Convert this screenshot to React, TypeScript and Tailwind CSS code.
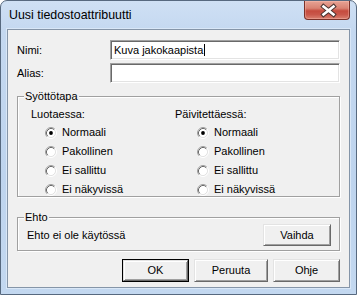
import React from "react";

function Radio({ checked, label }: { checked?: boolean; label: string }) {
  return (
    <div className="flex h-[13px] items-center gap-[5px]">
      <svg width="12" height="12" viewBox="0 0 12 12" className="shrink-0">
        <circle cx="6" cy="6" r="4.2" fill="#ffffff" />
        <path d="M2.11 9.89 A5.5 5.5 0 0 1 9.89 2.11" fill="none" stroke="#a0a0a0" strokeWidth="1" />
        <path d="M9.89 2.11 A5.5 5.5 0 0 1 2.11 9.89" fill="none" stroke="#ffffff" strokeWidth="1" />
        <path d="M2.82 9.18 A4.5 4.5 0 0 1 9.18 2.82" fill="none" stroke="#696969" strokeWidth="1" />
        <path d="M9.18 2.82 A4.5 4.5 0 0 1 2.82 9.18" fill="none" stroke="#e3e3e3" strokeWidth="1" />
        {checked && <circle cx="6" cy="6" r="1.9" fill="#000000" />}
      </svg>
      <span>{label}</span>
    </div>
  );
}

function Button({ label, w, def }: { label: string; w: string; def?: boolean }) {
  const inner = (
    <div className="flex h-full w-full items-center justify-center border border-t-[#e3e3e3] border-l-[#e3e3e3] border-r-[#696969] border-b-[#696969] bg-[#f0f0f0] shadow-[inset_1px_1px_0_#ffffff,inset_-1px_-1px_0_#a0a0a0]">
      {label}
    </div>
  );
  if (def) {
    return <div className={`h-full ${w} border border-black`}>{inner}</div>;
  }
  return <div className={`h-full ${w}`}>{inner}</div>;
}

function Input({ value, caret }: { value?: string; caret?: boolean }) {
  return (
    <div className="flex h-[20px] flex-1 items-center border border-t-[#a0a0a0] border-l-[#a0a0a0] border-r-white border-b-white bg-white pl-[2px] shadow-[inset_1px_1px_0_#696969,inset_-1px_-1px_0_#e3e3e3]">
      <span className="pl-[1px]">{value}</span>
      {caret && <span className="ml-[1px] h-[12px] w-[1px] bg-black" />}
    </div>
  );
}

export default function App() {
  return (
    <div className="h-[295px] w-[357px] font-['Liberation_Sans',Arial,sans-serif] text-[11px] leading-[13px] text-black">
      <div className="flex h-full w-full flex-col overflow-hidden rounded-t-[7px] border border-[#57697f] bg-[linear-gradient(#cfe0f4_0px,#c4d8f0_30px,#bed4ee_60%,#c3d8f0_100%)]">
        {/* Title bar */}
        <div className="flex h-[28px] shrink-0 items-start">
          <div className="flex h-full items-center pl-[8px] text-[12.4px] leading-[14px]">Uusi tiedostoattribuutti</div>
          <div className="ml-auto mr-[6px] h-[19px] w-[46px] overflow-hidden rounded-b-[4px] border border-t-0 border-[#7a3129] bg-[linear-gradient(#e7a395_0%,#d98373_40%,#c54b3e_55%,#c9574a_75%,#d98070_100%)] shadow-[inset_0_0_0_1px_rgba(255,200,190,0.35)]">
            <svg width="46" height="19" viewBox="0 0 46 19">
              <path d="M18.5 5.5 L28.5 13.5 M28.5 5.5 L18.5 13.5" stroke="#4a3431" strokeWidth="4.6" strokeLinecap="square" fill="none" />
              <path d="M18.5 5.5 L28.5 13.5 M28.5 5.5 L18.5 13.5" stroke="#ffffff" strokeWidth="2.6" strokeLinecap="square" fill="none" />
            </svg>
          </div>
        </div>

        {/* Client area */}
        <div className="mx-[6px] mb-[6px] flex flex-1 flex-col border border-[#8595a8] bg-[#f0f0f0] px-[9px] pt-[10px] shadow-[0_0_0_1px_#d9e7f7]">
          <div className="flex h-[20px] items-center">
            <div className="w-[93px]">Nimi:</div>
            <Input value="Kuva jakokaapista" caret />
          </div>
          <div className="mt-[3px] flex h-[20px] items-center">
            <div className="w-[93px]">Alias:</div>
            <Input />
          </div>

          {/* Syöttötapa group */}
          <div className="relative mt-[13px] h-[101px] border border-[#a0a0a0] pl-[13px] pt-[11px] shadow-[inset_1px_1px_0_#ffffff,1px_1px_0_#ffffff]">
            <span className="absolute left-[6px] top-[-7px] bg-[#f0f0f0] px-[1px]">Syöttötapa</span>
            <div className="flex">
              <div className="w-[144px]">
                <div className="h-[13px]">Luotaessa:</div>
                <div className="mt-[5px] flex flex-col gap-[6px] pl-[14px]">
                  <Radio checked label="Normaali" />
                  <Radio label="Pakollinen" />
                  <Radio label="Ei sallittu" />
                  <Radio label="Ei näkyvissä" />
                </div>
              </div>
              <div>
                <div className="h-[13px]">Päivitettäessä:</div>
                <div className="mt-[5px] flex flex-col gap-[6px] pl-[22px]">
                  <Radio checked label="Normaali" />
                  <Radio label="Pakollinen" />
                  <Radio label="Ei sallittu" />
                  <Radio label="Ei näkyvissä" />
                </div>
              </div>
            </div>
          </div>

          {/* Ehto group */}
          <div className="relative mt-[20px] flex h-[34px] items-center border border-[#a0a0a0] pb-[4px] pl-[9px] pr-[8px] pt-[6px] shadow-[inset_1px_1px_0_#ffffff,1px_1px_0_#ffffff]">
            <span className="absolute left-[6px] top-[-7px] bg-[#f0f0f0] px-[1px]">Ehto</span>
            <span>Ehto ei ole käytössä</span>
            <div className="ml-auto h-[22px]">
              <Button label="Vaihda" w="w-[68px]" />
            </div>
          </div>

          {/* Bottom buttons */}
          <div className="mt-[8px] flex h-[23px] justify-end gap-[5px]">
            <Button label="OK" w="w-[67px]" def />
            <Button label="Peruuta" w="w-[74px]" />
            <Button label="Ohje" w="w-[67px]" />
          </div>
        </div>
      </div>
    </div>
  );
}
